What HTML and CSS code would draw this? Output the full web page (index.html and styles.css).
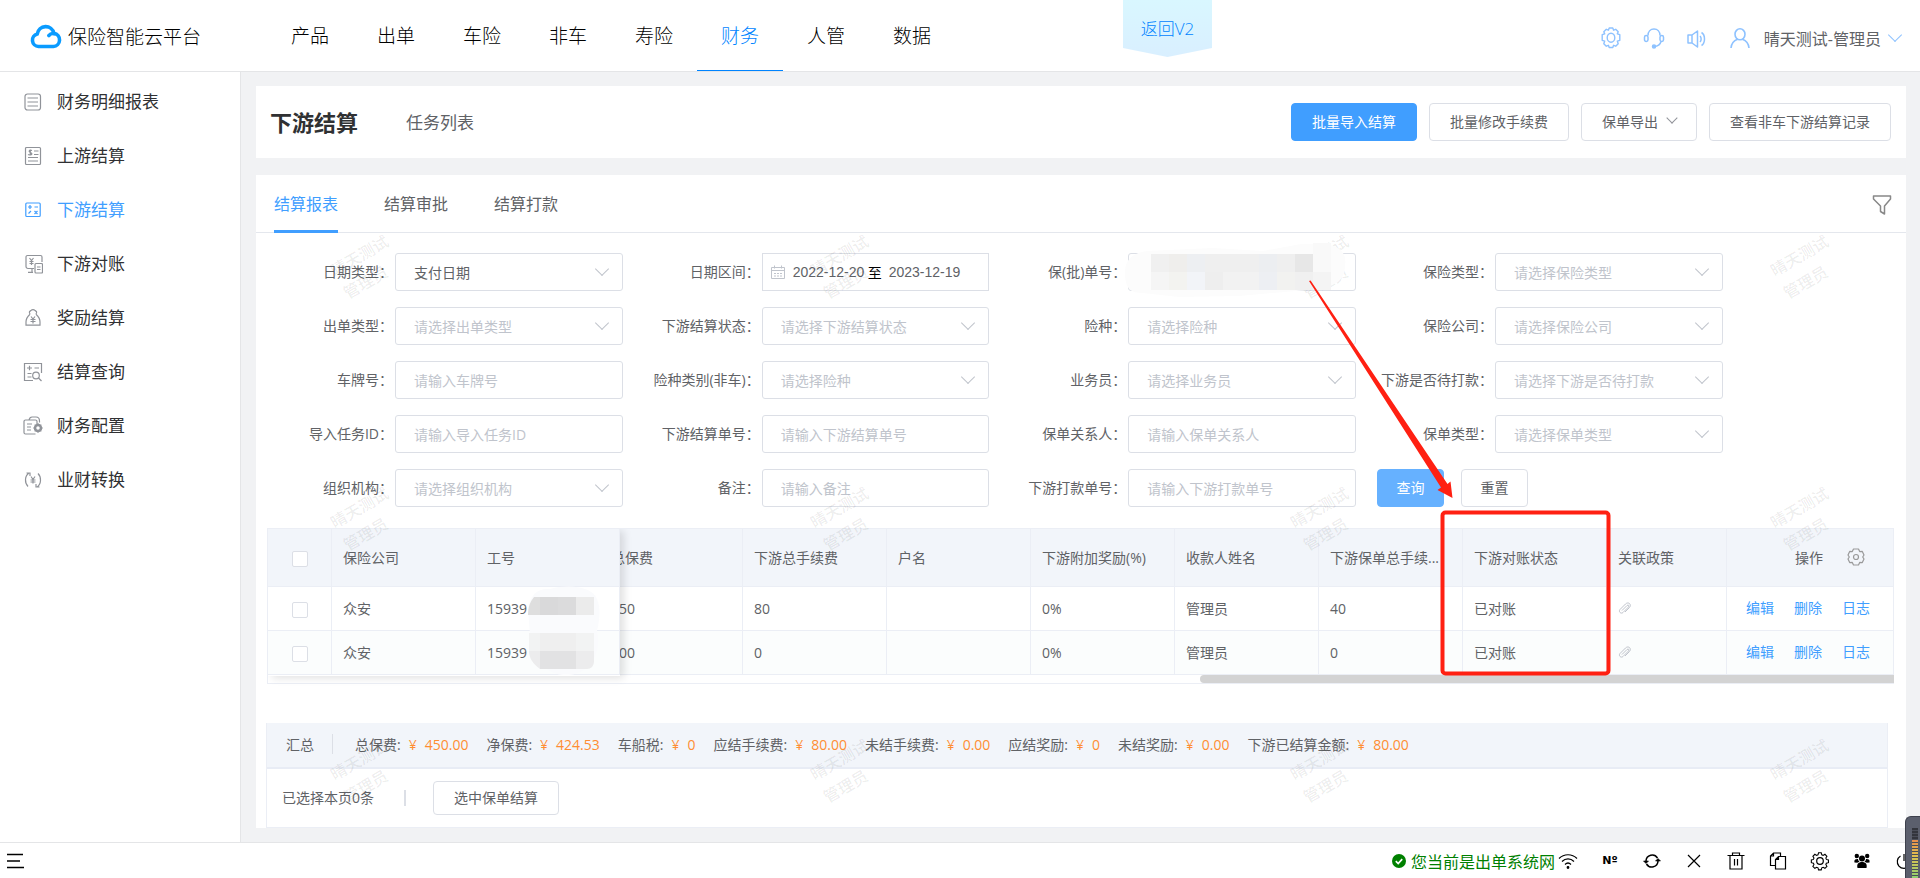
FILE: index.html
```html
<!DOCTYPE html>
<html lang="zh-CN">

<head>
    <meta charset="UTF-8">
    <meta name="viewport" content="width=device-width, initial-scale=1.0">
    <title>保险智能云平台</title>
    <link rel="stylesheet" href="styles.css">
</head>

<body>
    <header class="header">
        <a href="#" class="logo">
            <svg width="32" height="26" viewBox="0 0 32 26" fill="none" stroke="#0a9bff" stroke-width="3.6" stroke-linecap="round" stroke-linejoin="round">
                <path d="M8.500 23.500a6.300 6.300 0 0 1-1.300-12.400A8.600 9 0 0 1 24 10.400a6.600 6.600 0 0 1-.6 13.100z" />
                <path d="M24 10.600c-2.300-.3-4 .4-5.200 2" />
            </svg>
            <span>保险智能云平台</span>
        </a>
        <nav class="nav">
            <a href="#">产品</a>
            <a href="#">出单</a>
            <a href="#">车险</a>
            <a href="#">非车</a>
            <a href="#">寿险</a>
            <a href="#" class="active">财务</a>
            <a href="#">人管</a>
            <a href="#">数据</a>
        </nav>
        <a href="#" class="back">返回V2</a>
        <div class="user-bar">
            <svg width="22" height="22" viewBox="0 0 22 22" fill="none" stroke="#8ec2ff" stroke-width="1.4" stroke-linejoin="round">
                <path d="M9.200 1h3.600l.8 2.200 2.100-.9 2.500 2.500-.9 2.100 2.500.8v5.600l-2.500.8.9 2.600-2.500 2.500-2.100-.9-.8 2.200H9.200l-.8-2.200-2.100.9-2.500-2.500.9-2.600-2.500-.8V7.700l2.500-.8-.9-2.100 2.500-2.500 2.100.9z" />
                <ellipse cx="11" cy="10.700" rx="3.800" ry="4.500" />
            </svg>
            <svg width="22" height="22" viewBox="0 0 22 22" fill="none" stroke="#8ec2ff" stroke-width="1.500">
                <path d="M5 8.500C5 4.500 7.600 2 11 2s6 2.500 6 6.500" />
                <rect x="1.500" y="8.500" width="3.500" height="6" rx="1.700" />
                <rect x="17" y="8.500" width="3.500" height="6" rx="1.700" />
                <path d="M18 14.500c-.8 3-3 4.500-6 5" />
                <circle cx="11" cy="19.600" r="1.500" fill="#8ec2ff" />
            </svg>
            <svg width="22" height="22" viewBox="0 0 22 22" fill="none" stroke="#8ec2ff" stroke-width="1.500" stroke-linejoin="round">
                <path d="M2 8v8h4l5.500 4V4L6 8zM6 8v8M14 9c1.500 1.500 1.500 4.500 0 6M15.500 5.500c4 2.500 4 10.500 0 13" />
            </svg>
            <svg width="22" height="22" viewBox="0 0 22 22" fill="none" stroke="#8ec2ff" stroke-width="1.600">
                <ellipse cx="11" cy="7.300" rx="5" ry="5.500" />
                <path d="M2 21c.4-4.500 3-7.300 6.500-8.700M20 21c-.4-4.500-3-7.300-6.500-8.700" />
            </svg>
            <a href="#" class="user-name">晴天测试-管理员</a>
        </div>
    </header>

    <div class="body">
        <aside class="sidebar">
            <a href="#">
                <svg viewBox="0 0 20 20"><rect x="2" y="2" width="15.500" height="16" rx="2.500" /><path d="M4.500 6h10.500M4.500 10h10.500M4.500 14h10.500" /></svg>
                财务明细报表
            </a>
            <a href="#">
                <svg viewBox="0 0 20 20"><rect x="2.500" y="1.500" width="15" height="17" rx="1" /><path d="M11 5h4.500M11 8.500h4.500M5 11.500h10M5 15h10M9 4.500c-3-1-3.500 1-2 1.700s3 2 .5 2.600c-1 .2-2 0-2.500-.3M7.300 3.500v6" /></svg>
                上游结算
            </a>
            <a href="#" class="active">
                <svg viewBox="0 0 20 20"><rect x="2.800" y="3" width="14.400" height="13.500" rx="1" /><path d="M5 7h4M7 5v4M11.500 7h3.500M5.500 13.500l2.500-2.500M11.500 11l3 3M14.500 11l-3 3" /></svg>
                下游结算
            </a>
            <a href="#">
                <svg viewBox="0 0 20 20"><path d="M11 14.500H5a2 2 0 0 1-2-2V3a1.500 1.500 0 0 1 1.500-1.500h13A1.500 1.500 0 0 1 19 3v5M5 18.300h5M9 15v3M6.500 4l2 2.500 2-2.500M8.500 6.500v4.500M6.500 7.500h4M6.500 9.500h4" /><rect x="12" y="9.500" width="7.500" height="9.500" rx="1" /><path d="M14 13h3.500M14 15.500h3.500" /></svg>
                下游对账
            </a>
            <a href="#">
                <svg viewBox="0 0 20 20"><path d="M7 6.200C5.500 3.500 7 3 8 2.500c1-1.300 3-1.300 4 0 1 .5 2.500 1 1 3.700M7 6.200C5 8 3 10 3 14v3.200h14V14c0-4-2-6-4-7.800" /><path d="M8 8.500l2 2.500 2-2.500M10 11v4.500M7.500 11.500h5M7.500 13.500h5" /></svg>
                奖励结算
            </a>
            <a href="#">
                <svg viewBox="0 0 20 20"><path d="M10 18.500H1.500v-17h17V11" /><path d="M4 6h5M6.500 3.700v4.600M11.500 6H16M4.500 11.500h4M4.500 15h4" /><circle cx="13" cy="13.500" r="3.300" /><path d="M15.500 16l3 3" /></svg>
                结算查询
            </a>
            <a href="#">
                <svg viewBox="0 0 20 20"><path d="M14 8V5.500A1.500 1.500 0 0 0 12.500 4h-10A1.500 1.500 0 0 0 1 5.500v11A1.500 1.500 0 0 0 2.500 18h10M6 4c.5-2 1.500-3 3-3h4c2.500 0 3.500 1.500 3.500 4v1.500M4 8h5M4 11h4M4 14h4" /><circle cx="15" cy="12" r="3" stroke-width="2.500" /><path d="M15 7.300v1.500M15 15.200v1.500M10.300 12h1.500M18.200 12h1.500M11.700 8.700l1 1M17.300 14.300l1 1M18.300 8.700l-1 1M12.700 14.300l-1 1" /></svg>
                财务配置
            </a>
            <a href="#">
                <svg viewBox="0 0 20 20"><path d="M6 3C1.500 6 1.500 13 5 16.500M3.500 3H7v3M14 17c4.500-3 4.500-10 1-13.500M16.500 17H13v-3M8 6.500l2 3 2-3M10 9.500v4M7.500 10h5M7.500 12h5" /></svg>
                业财转换
            </a>
        </aside>

        <main class="main">
            <section class="card title-bar">
                <h1>下游结算</h1>
                <a href="#" class="task-link">任务列表</a>
                <div class="actions">
                    <button class="btn primary">批量导入结算</button>
                    <button class="btn">批量修改手续费</button>
                    <button class="btn">保单导出<i class="arrow"></i></button>
                    <button class="btn">查看非车下游结算记录</button>
                </div>
            </section>

            <section class="card report">
                <div class="tabs">
                    <a href="#" class="active">结算报表</a>
                    <a href="#">结算审批</a>
                    <a href="#">结算打款</a>
                    <svg class="filter-icon" width="20" height="22" viewBox="0 0 20 22" fill="none" stroke="#888" stroke-width="1.500" stroke-linejoin="round">
                        <path d="M1.500 3h17v3l-6 7v8l-4-2.500V13l-7-7z" />
                    </svg>
                </div>

                <form class="form">
                    <div class="field">
                        <label for="dateType">日期类型：</label>
                        <div class="control select filled"><select id="dateType"><option>支付日期</option></select></div>
                    </div>
                    <div class="field">
                        <label for="dateStart">日期区间：</label>
                        <div class="control date-range">
                            <svg width="14" height="14" viewBox="0 0 14 14" fill="none" stroke="#c0c4cc">
                                <path d="M.5 2.500h13v11H.5zM.5 5.500h13M3.500.5v3M10.500.5v3M3 8.500h2M6 8.500h2M9 8.500h2M3 11h2M6 11h2M9 11h2" />
                            </svg>
                            <input type="text" id="dateStart" value="2022-12-20">
                            <span>至</span>
                            <input type="text" aria-label="结束日期" value="2023-12-19">
                        </div>
                    </div>
                    <div class="field">
                        <label for="policyNo">保(批)单号：</label>
                        <div class="control">
                            <input type="text" id="policyNo">
                            <svg class="mosaic-policy" width="228" height="62" viewBox="0 0 228 62">
                                <path d="M2 34C2 20 10 14 24 12L90 9l50 3 38-7 24 0c14 2 22 8 20 22 0 14-10 20-26 23l-80 7-60 1-36-4C8 54 2 50 2 34z" fill="#fcfcfc" />
                                <path d="M190 4h18v34h-18z" fill="#f9f9f9" />
                                <path d="M28 15h18v18H28z" fill="#f0f0f0" />
                                <path d="M46 15h18v18H46z" fill="#efeeec" />
                                <path d="M64 15h18v18H64z" fill="#edeff2" />
                                <path d="M82 15h54v18H82z" fill="#efefef" />
                                <path d="M136 15h18v18h-18z" fill="#eceef1" />
                                <path d="M154 15h18v18h-18z" fill="#efefef" />
                                <path d="M172 15h18v18h-18z" fill="#e7e7e7" />
                                <path d="M28 33h18v18H28z" fill="#f5f5f5" />
                                <path d="M46 33h18v18H46z" fill="#f3f3f0" />
                                <path d="M64 33h18v18H64z" fill="#f2f4f8" />
                                <path d="M82 33h18v18H82z" fill="#eeeeee" />
                                <path d="M100 33h36v18h-36z" fill="#f2f2f2" />
                                <path d="M136 33h18v18h-18z" fill="#edeff3" />
                                <path d="M154 33h18v18h-18z" fill="#f2f2f0" />
                                <path d="M172 33h18v18h-18z" fill="#f0f0f0" />
                                <path d="M190 33h18v18h-18z" fill="#f4f4f4" />
                            </svg>
                        </div>
                    </div>
                    <div class="field">
                        <label for="insType">保险类型：</label>
                        <div class="control select"><select id="insType"><option>请选择保险类型</option></select></div>
                    </div>

                    <div class="field">
                        <label for="issueType">出单类型：</label>
                        <div class="control select"><select id="issueType"><option>请选择出单类型</option></select></div>
                    </div>
                    <div class="field">
                        <label for="settleStatus">下游结算状态：</label>
                        <div class="control select"><select id="settleStatus"><option>请选择下游结算状态</option></select></div>
                    </div>
                    <div class="field">
                        <label for="risk">险种：</label>
                        <div class="control select"><select id="risk"><option>请选择险种</option></select></div>
                    </div>
                    <div class="field">
                        <label for="company">保险公司：</label>
                        <div class="control select"><select id="company"><option>请选择保险公司</option></select></div>
                    </div>

                    <div class="field">
                        <label for="plate">车牌号：</label>
                        <div class="control"><input type="text" id="plate" placeholder="请输入车牌号"></div>
                    </div>
                    <div class="field">
                        <label for="riskKind">险种类别(非车)：</label>
                        <div class="control select"><select id="riskKind"><option>请选择险种</option></select></div>
                    </div>
                    <div class="field">
                        <label for="salesman">业务员：</label>
                        <div class="control select"><select id="salesman"><option>请选择业务员</option></select></div>
                    </div>
                    <div class="field">
                        <label for="waitPay">下游是否待打款：</label>
                        <div class="control select"><select id="waitPay"><option>请选择下游是否待打款</option></select></div>
                    </div>

                    <div class="field">
                        <label for="taskId">导入任务ID：</label>
                        <div class="control"><input type="text" id="taskId" placeholder="请输入导入任务ID"></div>
                    </div>
                    <div class="field">
                        <label for="settleNo">下游结算单号：</label>
                        <div class="control"><input type="text" id="settleNo" placeholder="请输入下游结算单号"></div>
                    </div>
                    <div class="field">
                        <label for="relation">保单关系人：</label>
                        <div class="control"><input type="text" id="relation" placeholder="请输入保单关系人"></div>
                    </div>
                    <div class="field">
                        <label for="policyType">保单类型：</label>
                        <div class="control select"><select id="policyType"><option>请选择保单类型</option></select></div>
                    </div>

                    <div class="field">
                        <label for="org">组织机构：</label>
                        <div class="control select"><select id="org"><option>请选择组织机构</option></select></div>
                    </div>
                    <div class="field">
                        <label for="remark">备注：</label>
                        <div class="control"><input type="text" id="remark" placeholder="请输入备注"></div>
                    </div>
                    <div class="field">
                        <label for="payNo">下游打款单号：</label>
                        <div class="control"><input type="text" id="payNo" placeholder="请输入下游打款单号"></div>
                    </div>
                    <div class="search-btns">
                        <button type="button" class="btn primary hover">查询</button>
                        <button type="button" class="btn">重置</button>
                    </div>
                </form>

                <div class="table-wrap">
                    <table>
                        <colgroup>
                            <col class="w-check">
                            <col class="w-col">
                            <col class="w-col">
                            <col class="w-part">
                            <col class="w-col">
                            <col class="w-col">
                            <col class="w-col">
                            <col class="w-col">
                            <col class="w-col">
                            <col class="w-col">
                            <col class="w-policy">
                            <col>
                        </colgroup>
                        <thead>
                            <tr>
                                <th class="check"><input type="checkbox" aria-label="全选"></th>
                                <th>保险公司</th>
                                <th>工号</th>
                                <th class="part"><span>总保费</span></th>
                                <th>下游总手续费</th>
                                <th>户名</th>
                                <th>下游附加奖励(%)</th>
                                <th>收款人姓名</th>
                                <th>下游保单总手续...</th>
                                <th>下游对账状态</th>
                                <th>关联政策</th>
                                <th class="ops-head">
                                    <div>操作
                                        <svg width="18" height="18" viewBox="0 0 18 18" fill="none" stroke="#999" stroke-width="1.200" stroke-linejoin="round">
                                            <path d="M6.500 1h5l1.200 2.600 2.600-.2 1.700 3.600-1.300 2 1.300 2-1.700 3.600-2.600-.2-1.200 2.600h-5l-1.200-2.600-2.600.2L1 11l1.300-2L1 7l1.700-3.600 2.600.2z" />
                                            <circle cx="9" cy="9" r="2.500" />
                                        </svg>
                                    </div>
                                </th>
                            </tr>
                        </thead>
                        <tbody>
                            <tr>
                                <td class="check"><input type="checkbox" aria-label="选择第1行"></td>
                                <td>众安</td>
                                <td>15939</td>
                                <td class="part"><span>450</span></td>
                                <td>80</td>
                                <td></td>
                                <td>0%</td>
                                <td>管理员</td>
                                <td>40</td>
                                <td>已对账</td>
                                <td><svg class="clip" width="14" height="14" viewBox="0 0 14 14"><path d="M4 9.500l5-5c1.400-1.200 2.600.2 1.500 1.500l-5.500 5.500c-2 1.800-4.800-.8-3-3L7.500 3c3-2.800 6.500.6 4 3.500L7 11" /></svg></td>
                                <td class="ops"><div><a href="#">编辑</a><a href="#">删除</a><a href="#">日志</a></div></td>
                            </tr>
                            <tr>
                                <td class="check"><input type="checkbox" aria-label="选择第2行"></td>
                                <td>众安</td>
                                <td>15939</td>
                                <td class="part"><span>000</span></td>
                                <td>0</td>
                                <td></td>
                                <td>0%</td>
                                <td>管理员</td>
                                <td>0</td>
                                <td>已对账</td>
                                <td><svg class="clip" width="14" height="14" viewBox="0 0 14 14"><path d="M4 9.500l5-5c1.400-1.200 2.600.2 1.500 1.500l-5.500 5.500c-2 1.800-4.800-.8-3-3L7.500 3c3-2.800 6.500.6 4 3.500L7 11" /></svg></td>
                                <td class="ops"><div><a href="#">编辑</a><a href="#">删除</a><a href="#">日志</a></div></td>
                            </tr>
                        </tbody>
                    </table>
                    <div class="scroll-bar"><span></span></div>
                    <div class="fixed-shadow"></div>
                    <svg class="mosaic-no" width="80" height="92" viewBox="0 0 80 92">
                        <path d="M4 24C6 8 14 2 26 3c20-5 40-2 46 8 6 12 3 24 1 34 4 16-2 30-12 38-10 8-28 8-38 0C12 76 6 64 6 48z" fill="#fafbfd" />
                        <path d="M10 11h60v18H4c0-8 2-13 6-18z" fill="#dedede" />
                        <path d="M16 11h18v18H16z" fill="#d9d9da" />
                        <path d="M34 11h18v18H34z" fill="#dbdbdc" />
                        <path d="M52 11h18v18H52z" fill="#ebebeb" />
                        <path d="M5 47h65v18H5z" fill="#f2f3f3" />
                        <path d="M16 47h36v18H16z" fill="#efefef" />
                        <path d="M5 65h65v10c0 5-3 8-7 8H16C9 78 5 72 5 65z" fill="#ececed" />
                        <path d="M16 65h36v18H16z" fill="#e2e2e3" />
                    </svg>
                </div>

                <div class="summary">
                    <div class="summary-row">
                        <span class="sum-title">汇总</span>
                        <span>总保费:<b>¥</b><b>450.00</b></span>
                        <span>净保费:<b>¥</b><b>424.53</b></span>
                        <span>车船税:<b>¥</b><b>0</b></span>
                        <span>应结手续费:<b>¥</b><b>80.00</b></span>
                        <span>未结手续费:<b>¥</b><b>0.00</b></span>
                        <span>应结奖励:<b>¥</b><b>0</b></span>
                        <span>未结奖励:<b>¥</b><b>0.00</b></span>
                        <span>下游已结算金额:<b>¥</b><b>80.00</b></span>
                    </div>
                    <div class="selected-row">
                        <span class="selected">已选择本页0条</span>
                        <button class="btn small">选中保单结算</button>
                    </div>
                </div>

                <div class="watermark" aria-hidden="true">
                    <p>晴天测试<br>管理员</p>
                    <p>晴天测试<br>管理员</p>
                    <p>晴天测试<br>管理员</p>
                    <p>晴天测试<br>管理员</p>
                    <p>晴天测试<br>管理员</p>
                    <p>晴天测试<br>管理员</p>
                    <p>晴天测试<br>管理员</p>
                    <p>晴天测试<br>管理员</p>
                    <p>晴天测试<br>管理员</p>
                    <p>晴天测试<br>管理员</p>
                    <p>晴天测试<br>管理员</p>
                    <p>晴天测试<br>管理员</p>
                </div>
            </section>
        </main>
    </div>

    <footer class="footer">
        <button class="menu-btn" aria-label="菜单">
            <svg width="20" height="18" viewBox="0 0 20 18" stroke="#000" stroke-width="1.400"><path d="M2 2.500h16M2 9h13M2 15.500h17" /></svg>
        </button>
        <div class="net">
            <svg width="14" height="14" viewBox="0 0 14 14"><circle cx="7" cy="7" r="7" fill="#008000" /><path d="M3.800 7.200l2.400 2.300 4-4.300" fill="none" stroke="#fff" stroke-width="1.700" /></svg>
            <span>您当前是出单系统网</span>
        </div>
        <div class="tools">
            <svg viewBox="0 0 20 20"><path d="M1 7.500c5-5 13-5 18 0M4 10.500c3.500-3.500 8.500-3.500 12 0M7 13.500c1.800-1.800 4.200-1.800 6 0" /><circle cx="10" cy="16.500" r=".8" fill="#000" /></svg>
            <span>Nº</span>
            <svg viewBox="0 0 20 20"><path d="M4 10a6.200 6.200 0 0 1 11.500-3M16 10a6.200 6.200 0 0 1-11.500 3" stroke-width="1.500" /><path d="M1.500 10h5L4 12.500zM13.500 10h5L16 7.500z" fill="#000" stroke-width=".6" /></svg>
            <svg viewBox="0 0 20 20"><path d="M4 4l12 12M16 4L4 16" /></svg>
            <svg viewBox="0 0 20 20"><path d="M1.500 4.500h17M4 4.500v13.500h12V4.500M6.500 4.500V2h7v2.500M8.500 8v6.500M11.500 8v6.500" /></svg>
            <svg viewBox="0 0 20 20"><path d="M7.500 18V8.500l3-3H17.500V18zM10.500 5.500v3h-3M12.500 5.500V2H5.500L2.500 5v9.500h5M5.500 2v3h-3" /></svg>
            <svg viewBox="0 0 20 20"><path d="M8.500 1.500h3l.6 2.300 1.500.6 2-1.200 2.200 2.200-1.200 2 .6 1.500 2.300.6v3l-2.300.6-.6 1.500 1.200 2-2.200 2.200-2-1.200-1.500.6-.6 2.300h-3l-.6-2.300-1.500-.6-2 1.200-2.200-2.200 1.200-2-.6-1.500-2.300-.6v-3l2.300-.6.6-1.500-1.200-2 2.200-2.200 2 1.200 1.500-.6z" transform="translate(.9 .4) scale(.9)" /><circle cx="10" cy="10" r="3.300" /></svg>
            <svg viewBox="0 0 20 20"><g fill="#000" stroke="none"><circle cx="10" cy="7.500" r="3" /><circle cx="4.800" cy="5" r="2.200" /><circle cx="15.200" cy="5" r="2.200" /><path d="M5.500 17c-1-4 1-6 4.500-6s5.500 2 4.500 6zM2.500 11.500C2 8.500 3.500 8 6 8c.2 1.500.8 2.300 1.500 2.800-1 .4-1.700.5-2.200.9zM17.500 11.500c.5-3-1-3.500-3.500-3.500-.2 1.500-.8 2.300-1.500 2.800 1 .4 1.700.5 2.200.9z" /></g></svg>
            <svg viewBox="0 0 20 20"><path d="M6.500 5a6.700 6.700 0 1 0 7 0M10 3v7" /></svg>
        </div>
        <div class="meter"><span></span></div>
    </footer>

    <!-- 红色标注 -->
    <svg class="mark" width="1920" height="878" viewBox="0 0 1920 878">
        <path d="M1309 281l1.600-.6L1447.500 484l3-2.500 2 16.500-15-8 3.500-2.500z" fill="#ff2012" />
        <rect x="1442.500" y="512.500" width="166" height="161" rx="3" fill="none" stroke="#ff2012" stroke-width="4" />
    </svg>
</body>

</html>
```
FILE: styles.css
```css
:root {
    --primary: #409eff;
    --text: #606266;
    --placeholder: #c0c4cc;
    --border: #dcdfe6;
    --line: #ebeef5;
    --headBg: #f2f5fa;
}

* {
    box-sizing: border-box;
}

body {
    position: relative;
    display: flex;
    flex-direction: column;
    min-height: 100vh;
    margin: 0;
    overflow: hidden;
    background-color: #fff;
    color: var(--text);
    font-family: "Open Sans", "Noto Sans CJK SC", sans-serif;
    font-size: 14px;
}

a {
    color: inherit;
    text-decoration: none;
}

input,
select,
button {
    font-family: inherit;
    font-size: 14px;
    color: inherit;
}

/* 顶部 */
.header {
    position: relative;
    display: flex;
    height: 72px;
    border-bottom: 1px solid #e4e5e7;
}

.logo {
    display: flex;
    align-items: center;
    width: 267px;
    padding-left: 30px;
    gap: 6px;
    color: #000;
    font-size: 19px;
    font-weight: 300;
}

.nav {
    display: flex;
}

.nav a {
    display: flex;
    align-items: center;
    height: 71px;
    padding: 0 24px;
    border-bottom: 1px solid transparent;
    color: #000;
    font-size: 19px;
    font-weight: 300;
}

.nav .active {
    border-color: #0084ff;
    color: #0084ff;
}

.back {
    position: absolute;
    left: 1123px;
    top: 0;
    width: 89px;
    height: 57px;
    background: linear-gradient(#d9f7ff, #d9efff);
    clip-path: polygon(0 0, 100% 0, 100% 48px, 50% 100%, 0 48px);
    color: #0084ff;
    font-size: 17px;
    font-weight: 300;
    line-height: 58px;
    text-align: center;
}

.user-bar {
    display: flex;
    align-items: center;
    gap: 21px;
    margin-left: auto;
    padding: 4px 20px 0 0;
}

.user-name {
    display: flex;
    align-items: center;
    margin-left: -8px;
    gap: 9px;
    font-size: 16px;
}

.user-name::after,
.arrow,
.select::after {
    content: "";
    width: 9px;
    height: 9px;
    border: solid var(--placeholder);
    border-width: 0 1px 1px 0;
    transform: translateY(-3px) rotate(45deg);
}

.user-name::after {
    border-color: #8ec2ff;
}

/* 左侧菜单 */
.body {
    display: flex;
    flex: 1;
}

.sidebar {
    flex: none;
    width: 241px;
    padding-top: 3px;
    border-right: 1px solid #e4e5e7;
}

.sidebar a {
    display: flex;
    align-items: center;
    height: 54px;
    padding-left: 23px;
    gap: 14px;
    color: #303133;
    font-size: 17px;
    line-height: 20px;
}

.sidebar svg {
    width: 20px;
    height: 20px;
    fill: none;
    stroke: #909399;
    stroke-width: 1.2;
}

.sidebar .active {
    color: var(--primary);
}

.sidebar .active svg {
    stroke: var(--primary);
}

/* 内容 */
.main {
    flex: 1;
    min-width: 0;
    padding: 14px 14px 14px 15px;
    background-color: #f1f2f4;
}

.card {
    background-color: #fff;
}

.title-bar {
    display: flex;
    align-items: center;
    height: 72px;
    margin-bottom: 17px;
    padding: 0 15px 0 14px;
}

.title-bar h1 {
    margin: 0;
    padding-bottom: 2px;
    color: #303133;
    font-size: 22px;
}

.task-link {
    margin-left: 48px;
    padding-bottom: 1px;
    font-size: 17px;
}

.actions {
    display: flex;
    gap: 12px;
    margin-left: auto;
}

.btn {
    display: flex;
    align-items: center;
    justify-content: center;
    height: 38px;
    padding: 0 20px 2px;
    border: 1px solid var(--border);
    border-radius: 4px;
    background-color: #fff;
    white-space: nowrap;
}

.btn.primary {
    border-color: var(--primary);
    background-color: var(--primary);
    color: #fff;
}

.btn.primary.hover {
    border-color: #66b1ff;
    background-color: #66b1ff;
}

.btn.small {
    height: 34px;
}

.btn .arrow {
    width: 8px;
    height: 8px;
    margin-left: 10px;
    border-color: #909399;
}

.report {
    position: relative;
}

.tabs {
    display: flex;
    align-items: center;
    height: 58px;
    padding: 0 14px 0 18px;
    gap: 46px;
    border-bottom: 1px solid #e4e7ed;
    font-size: 16px;
}

.tabs a {
    height: 58px;
    line-height: 58px;
}

.tabs .active {
    border-bottom: 3px solid var(--primary);
    color: var(--primary);
}

.filter-icon {
    margin-left: auto;
}

/* 查询条件 */
.form {
    display: grid;
    grid-template-columns: repeat(4, 2fr) 1fr;
    row-gap: 16px;
    padding: 20px 0 21px;
}

.field {
    display: flex;
    align-items: center;
}

.field:nth-child(4n + 1) {
    grid-column: 1;
}

.field label {
    flex: none;
    width: 139px;
    padding: 0 2px 2px 0;
    text-align: right;
    white-space: nowrap;
}

.control {
    position: relative;
    display: flex;
    align-items: center;
    flex: 1;
    height: 38px;
}

.control > input,
.control > select {
    width: 100%;
    height: 38px;
    padding: 0 18px;
    border: 1px solid var(--border);
    border-radius: 3px;
    outline: none;
    background-color: #fff;
    appearance: none;
}

.control input::placeholder,
.control select {
    color: var(--placeholder);
}

.control.filled select {
    color: var(--text);
}

.select::after {
    position: absolute;
    right: 16px;
    pointer-events: none;
}

.control.date-range {
    padding-left: 8px;
    border: 1px solid var(--border);
    color: #000;
}

.date-range > input {
    width: 75px;
    height: 34px;
    padding: 0;
    border: 0;
    color: var(--text);
    font-family: "Liberation Sans", sans-serif;
}

.date-range svg {
    margin-right: 8px;
}

.date-range span {
    margin-right: 7px;
}

.mosaic-policy {
    position: absolute;
    left: -5px;
    top: -14px;
    z-index: 1;
}

.search-btns {
    display: flex;
    gap: 17px;
    padding-left: 21px;
}

.search-btns .btn {
    width: 67px;
}

/* 表格 */
.table-wrap {
    position: relative;
    margin: 0 12px 39px 11px;
    border: 1px solid var(--line);
    border-right: 0;
}

table {
    width: 100%;
    table-layout: fixed;
    border-collapse: separate;
    border-spacing: 0;
}

.w-check {
    width: 64px;
}

.w-col {
    width: 144px;
}

.w-part {
    width: 123px;
}

.w-policy {
    width: 120px;
}

th,
td {
    height: 44px;
    padding: 0 11px 1px;
    overflow: hidden;
    border-right: 1px solid var(--line);
    border-bottom: 1px solid var(--line);
    font-weight: 400;
    text-align: left;
    text-overflow: ellipsis;
    white-space: nowrap;
}

th {
    height: 58px;
    background-color: var(--headBg);
}

tbody tr:nth-child(2) td {
    background-color: #fbfdfd;
}

.check {
    text-align: center;
}

.check input {
    width: 16px;
    height: 16px;
    margin: 0;
    border: 1px solid var(--border);
    border-radius: 2px;
    background-color: #fff;
    appearance: none;
    vertical-align: middle;
}

.part {
    padding-left: 0;
    text-overflow: clip;
}

.part span {
    margin-left: -9px;
}

.clip {
    display: block;
    fill: none;
    stroke: var(--placeholder);
}

.ops-head div {
    display: flex;
    align-items: center;
    justify-content: flex-end;
    gap: 24px;
    padding-right: 17px;
}

.ops div {
    display: flex;
    justify-content: flex-end;
    gap: 20px;
    padding: 0 12px 2px 0;
    color: var(--primary);
}

.scroll-bar {
    display: flex;
    justify-content: flex-end;
    height: 8px;
}

.scroll-bar span {
    width: calc(43% - 5px);
    border-radius: 4px 0 0 4px;
    background-color: #d3d3d3;
}

.fixed-shadow {
    position: absolute;
    left: 0;
    top: 0;
    width: 352px;
    height: 147px;
    box-shadow: 4px 2px 8px rgba(0, 0, 0, 0.12);
    clip-path: inset(0 -14px -14px 0);
    pointer-events: none;
}

.mosaic-no {
    position: absolute;
    left: 256px;
    top: 57px;
}

/* 汇总 */
.summary {
    margin: 0 18px 0 10px;
    border: 1px solid var(--line);
    border-top: 0;
}

.summary-row {
    display: flex;
    align-items: center;
    height: 46px;
    padding: 0 0 2px 19px;
    gap: 18px;
    border-bottom: 2px solid #e8ecf5;
    background-color: var(--headBg);
}

.summary-row b {
    margin-left: 8px;
    color: #ff8d32;
    font-weight: 400;
}

.summary-row .sum-title {
    padding-right: 18px;
    border-right: 1px solid var(--border);
    margin-right: 4px;
}

.selected-row {
    display: flex;
    align-items: center;
    height: 58px;
    padding-left: 15px;
}

.selected {
    width: 124px;
    margin-right: 27px;
    border-right: 2px solid var(--border);
    line-height: 16px;
}

/* 水印 */
.watermark {
    position: absolute;
    inset: 0;
    display: grid;
    grid-template-columns: repeat(4, 480px);
    grid-auto-rows: 252px;
    padding: 66px 0 0 78px;
    overflow: hidden;
    pointer-events: none;
}

.watermark p {
    width: 64px;
    height: 52px;
    margin: 0;
    transform: rotate(-30deg);
    color: rgba(0, 0, 0, 0.08);
    font-size: 16px;
    font-weight: 500;
    line-height: 26px;
    white-space: nowrap;
}

/* 底部 */
.footer {
    position: relative;
    display: flex;
    align-items: center;
    height: 36px;
    border-top: 1px solid #e4e5e7;
    color: #000;
}

.menu-btn {
    display: flex;
    margin-right: auto;
    padding: 0 0 0 5px;
    border: 0;
    background: none;
}

.net {
    display: flex;
    align-items: center;
    gap: 5px;
    margin-right: 3px;
    color: #008000;
    font-size: 16px;
}

.tools {
    display: flex;
    align-items: center;
    gap: 22px;
    padding-right: 6px;
}

.tools svg {
    width: 20px;
    height: 20px;
    fill: none;
    stroke: #000;
    stroke-width: 1.2;
}

.tools span {
    width: 20px;
    font-family: "DejaVu Sans", sans-serif;
    font-size: 11px;
    font-weight: 600;
    text-align: center;
}

.meter {
    position: absolute;
    right: 0;
    bottom: 0;
    width: 15px;
    height: 62px;
    padding: 11px 2px 0 6px;
    border: 1px solid #3d404c;
    border-width: 1px 0 0 1px;
    border-radius: 6px 0 0 0;
    background-color: #5b5f6d;
}

.meter span {
    display: block;
    height: 100%;
    background:
        repeating-linear-gradient(transparent 0 2px, #4a4d58 2px 3px),
        linear-gradient(#33353d 0 11px, #e88b4c 11px, #e0c050 28px, #8fd070 50px);
}

/* 标注层 */
.mark {
    position: absolute;
    left: 0;
    top: 0;
    z-index: 2;
    pointer-events: none;
}
```
